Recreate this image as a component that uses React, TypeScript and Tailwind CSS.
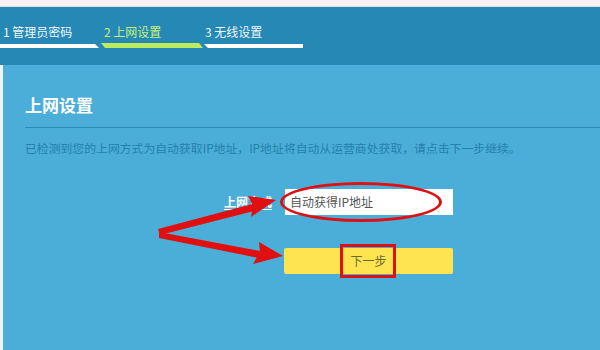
import React from "react";

const font = { fontFamily: '"Noto Sans CJK SC", "Noto Sans", sans-serif' };

export default function App() {
  return (
    <div
      className="relative w-[600px] h-[350px] overflow-hidden flex flex-col bg-[#f6f0f0]"
      style={font}
    >
      {/* top strip */}
      <div className="h-[7px] shrink-0 bg-[#f7f1f1] border-b border-[#e6dede]" />

      {/* header with step tabs */}
      <div className="h-[58px] shrink-0 bg-[#2688b4] pt-[17px]">
        <div className="flex">
          <div className="w-[101px] flex flex-col">
            <span className="pl-[3px] text-[12px] leading-[16px] text-[#eef7fb] whitespace-nowrap">
              1 管理员密码
            </span>
            <div className="mt-[4px] h-[4px] w-[99px] bg-white [clip-path:polygon(0_0,calc(100%-4px)_0,100%_100%,0_100%)]" />
          </div>
          <div className="w-[101px] flex flex-col">
            <span className="pl-[3px] text-[12px] leading-[16px] text-[#c6f27a] whitespace-nowrap">
              2 上网设置
            </span>
            <div className="mt-[3px] h-[5px] w-[102px] bg-[#bdeb5e] [clip-path:polygon(0_0,calc(100%-4px)_0,100%_100%,4px_100%)]" />
          </div>
          <div className="w-[101px] flex flex-col">
            <span className="pl-[3px] text-[12px] leading-[16px] text-[#eef7fb] whitespace-nowrap">
              3 无线设置
            </span>
            <div className="mt-[4px] ml-[2px] h-[4px] w-[99px] bg-white [clip-path:polygon(0_0,100%_0,100%_100%,4px_100%)]" />
          </div>
        </div>
      </div>

      {/* body */}
      <div className="flex-1 flex">
        <div className="w-[3px] bg-[#eef3f5]" />
        <div className="flex-1 bg-[#4baed8] pt-[28px] pl-[22px]">
          <h1 className="text-[17px] leading-[24px] font-bold text-white">上网设置</h1>
          <div className="mt-[10px] h-px bg-[#2d8cb7]" />
          <p className="mt-[12px] text-[11.85px] leading-[16px] text-[#2580ad] whitespace-nowrap">
            已检测到您的上网方式为自动获取IP地址，IP地址将自动从运营商处获取，请点击下一步继续。
          </p>

          <div className="mt-[33px] flex items-center">
            <span className="w-[247px] text-right text-[12px] leading-[16px] font-bold text-white underline underline-offset-2">
              上网方式
            </span>
            <div className="ml-[13px] w-[168px] h-[26px] bg-white flex items-center pl-[5px]">
              <span className="text-[12px] text-[#555]">自动获得IP地址</span>
            </div>
          </div>

          <div className="mt-[33px] pl-[259px]">
            <div className="relative w-[169px] h-[26px] bg-[#ffe452] rounded-[2px] flex items-center justify-center">
              <span className="text-[12px] text-[#6b6a32]">下一步</span>
              <div className="absolute left-[56px] top-[-4px] w-[56px] h-[34px] border-[3px] border-[#e01010]" />
            </div>
          </div>
        </div>
      </div>

      {/* red ellipse annotation */}
      <div className="absolute left-[280px] top-[182px] w-[162px] h-[40px] rounded-[50%] border-[3px] border-[#e01010]" />

      {/* red arrows annotation */}
      <svg className="absolute left-0 top-0" width="600" height="350" viewBox="0 0 600 350">
        <polygon points="158,229 160,235 258,210 256,203" fill="#e01010" />
        <polygon points="276,200 248,196 253,206 251,217" fill="#e01010" />
        <polygon points="159,232 159,238 259,258 260,251" fill="#e01010" />
        <polygon points="283,256 259,242 260,252 253,264" fill="#e01010" />
      </svg>
    </div>
  );
}
